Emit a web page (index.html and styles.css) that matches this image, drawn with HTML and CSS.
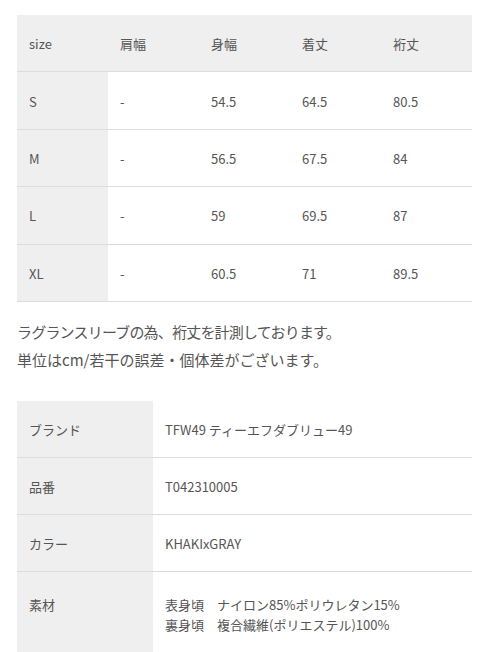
FILE: index.html
```html
<!DOCTYPE html>
<html lang="ja">
<head>
<meta charset="utf-8">
<link rel="stylesheet" href="styles.css">
</head>
<body>
<div class="page">
  <table class="size-table">
    <thead>
      <tr><th>size</th><th>肩幅</th><th>身幅</th><th>着丈</th><th>裄丈</th></tr>
    </thead>
    <tbody>
      <tr><th>S</th><td>-</td><td>54.5</td><td>64.5</td><td>80.5</td></tr>
      <tr><th>M</th><td>-</td><td>56.5</td><td>67.5</td><td>84</td></tr>
      <tr><th>L</th><td>-</td><td>59</td><td>69.5</td><td>87</td></tr>
      <tr><th>XL</th><td>-</td><td>60.5</td><td>71</td><td>89.5</td></tr>
    </tbody>
  </table>
  <div class="notes">
    <p class="note-tight">ラグランスリーブの為、裄丈を計測しております。</p>
    <p>単位はcm/若干の誤差・個体差がございます。</p>
  </div>
  <table class="spec-table">
    <tbody>
      <tr><th>ブランド</th><td>TFW49 ティーエフダブリュー49</td></tr>
      <tr><th>品番</th><td>T042310005</td></tr>
      <tr><th>カラー</th><td>KHAKIxGRAY</td></tr>
      <tr><th>素材</th><td>表身頃　ナイロン85%ポリウレタン15%<br>裏身頃　複合繊維(ポリエステル)100%</td></tr>
    </tbody>
  </table>
</div>
</body>
</html>
```
FILE: styles.css
```css
html, body {
  margin: 0;
  padding: 0;
  background: #fff;
}
body {
  font-family: "Noto Sans CJK JP", "Noto Sans", sans-serif;
  color: #555;
  font-size: 13px;
}
.page {
  padding: 15px 11px 0 17px;
}
table {
  border-collapse: collapse;
  width: 100%;
  table-layout: fixed;
}
th, td {
  font-weight: normal;
  text-align: left;
  padding: 0 0 0 12px;
  line-height: 20px;
}
.size-table th, .size-table td {
  height: 54.4px;
  width: 20%;
  vertical-align: middle;
  padding-top: 2px;
  border-bottom: 1px solid #dcdcdc;
}
.size-table thead th {
  background: #efefef;
}
.size-table tbody th {
  background: #efefef;
}
.notes {
  margin: 16px 0 0;
  font-size: 15px;
}
.notes p {
  margin: 0;
  line-height: 28px;
  white-space: nowrap;
}
.notes .note-tight {
  letter-spacing: -0.8px;
}
.spec-table {
  margin-top: 27px;
}
.spec-table th {
  width: 124px;
  background: #efefef;
}
.spec-table th, .spec-table td {
  vertical-align: top;
  padding-top: 19px;
  padding-bottom: 17px;
  border-bottom: 1px solid #dcdcdc;
}
.spec-table tr:last-child th, .spec-table tr:last-child td {
  padding-top: 23px;
  border-bottom: none;
  height: 80px;
}
```
